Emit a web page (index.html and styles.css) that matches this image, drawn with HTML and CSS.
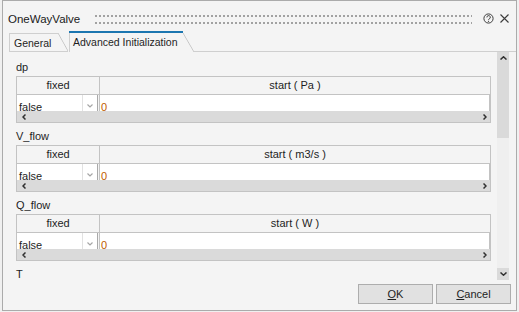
FILE: index.html
```html
<!DOCTYPE html>
<html lang="en">
<head>
  <meta charset="UTF-8">
  <title>OneWayValve</title>
  <link rel="stylesheet" href="styles.css">
</head>
<body>

  <div class="window">

    <!-- Title bar -->
    <div class="titlebar">
      <span class="title">OneWayValve</span>
      <div class="grip"></div>
      <svg class="help-icon" width="11" height="11" viewBox="0 0 11 11">
        <circle cx="5.5" cy="5.5" r="4.6" fill="none" stroke="#3c3c3c" stroke-width="1"/>
        <path d="M3.9 4.4 A1.7 1.7 0 1 1 6.4 5.8 C5.8 6.2 5.5 6.5 5.5 7.1" fill="none" stroke="#3c3c3c" stroke-width="1"/>
        <circle cx="5.5" cy="8.3" r="0.6" fill="#3c3c3c"/>
      </svg>
      <svg class="close-icon" width="9" height="9" viewBox="0 0 9 9">
        <path d="M0.5 0.5 L8.5 8.5 M8.5 0.5 L0.5 8.5" stroke="#3c3c3c" stroke-width="1.1"/>
      </svg>
    </div>

    <!-- Tabs -->
    <div class="tabs">
      <div class="tab tab-general">General</div>
      <div class="tab tab-active">Advanced Initialization</div>
      <div class="tab-fill"></div>
    </div>

    <!-- Parameters -->
    <div class="content">
      <div class="params">

        <div class="param-name">dp</div>
        <div class="grid">
          <div class="grid-head">
            <div class="head-fixed">fixed</div>
            <div class="head-start">start ( Pa )</div>
          </div>
          <div class="grid-row">
            <div class="combo">
              <span class="combo-text">false</span>
              <span class="combo-btn"><svg width="6" height="4" viewBox="0 0 6 4"><path d="M0.5 0.5 L3 3 L5.5 0.5" fill="none" stroke="#a6a6a6" stroke-width="1.2"/></svg></span>
            </div>
            <div class="start-cell">0</div>
          </div>
          <div class="hscroll">
            <svg width="4" height="6" viewBox="0 0 4 6"><path d="M3.5 0.5 L1 3 L3.5 5.5" fill="none" stroke="#303030" stroke-width="1.5"/></svg>
            <svg width="4" height="6" viewBox="0 0 4 6"><path d="M0.5 0.5 L3 3 L0.5 5.5" fill="none" stroke="#303030" stroke-width="1.5"/></svg>
          </div>
        </div>

        <div class="param-name">V_flow</div>
        <div class="grid">
          <div class="grid-head">
            <div class="head-fixed">fixed</div>
            <div class="head-start">start ( m3/s )</div>
          </div>
          <div class="grid-row">
            <div class="combo">
              <span class="combo-text">false</span>
              <span class="combo-btn"><svg width="6" height="4" viewBox="0 0 6 4"><path d="M0.5 0.5 L3 3 L5.5 0.5" fill="none" stroke="#a6a6a6" stroke-width="1.2"/></svg></span>
            </div>
            <div class="start-cell">0</div>
          </div>
          <div class="hscroll">
            <svg width="4" height="6" viewBox="0 0 4 6"><path d="M3.5 0.5 L1 3 L3.5 5.5" fill="none" stroke="#303030" stroke-width="1.5"/></svg>
            <svg width="4" height="6" viewBox="0 0 4 6"><path d="M0.5 0.5 L3 3 L0.5 5.5" fill="none" stroke="#303030" stroke-width="1.5"/></svg>
          </div>
        </div>

        <div class="param-name">Q_flow</div>
        <div class="grid">
          <div class="grid-head">
            <div class="head-fixed">fixed</div>
            <div class="head-start">start ( W )</div>
          </div>
          <div class="grid-row">
            <div class="combo">
              <span class="combo-text">false</span>
              <span class="combo-btn"><svg width="6" height="4" viewBox="0 0 6 4"><path d="M0.5 0.5 L3 3 L5.5 0.5" fill="none" stroke="#a6a6a6" stroke-width="1.2"/></svg></span>
            </div>
            <div class="start-cell">0</div>
          </div>
          <div class="hscroll">
            <svg width="4" height="6" viewBox="0 0 4 6"><path d="M3.5 0.5 L1 3 L3.5 5.5" fill="none" stroke="#303030" stroke-width="1.5"/></svg>
            <svg width="4" height="6" viewBox="0 0 4 6"><path d="M0.5 0.5 L3 3 L0.5 5.5" fill="none" stroke="#303030" stroke-width="1.5"/></svg>
          </div>
        </div>

        <div class="param-name">T</div>
      </div>

      <!-- Vertical scrollbar -->
      <div class="vscroll">
        <div class="vs-thumb">
          <svg width="7" height="4" viewBox="0 0 7 4"><path d="M0.5 3.5 L3.5 0.8 L6.5 3.5" fill="none" stroke="#303030" stroke-width="1.5"/></svg>
        </div>
        <div class="vs-track"></div>
        <div class="vs-down">
          <svg width="7" height="4" viewBox="0 0 7 4"><path d="M0.5 0.5 L3.5 3.2 L6.5 0.5" fill="none" stroke="#303030" stroke-width="1.5"/></svg>
        </div>
      </div>
    </div>

    <!-- Dialog buttons -->
    <div class="buttons">
      <button class="btn"><u>O</u>K</button>
      <button class="btn"><u>C</u>ancel</button>
    </div>

  </div>

</body>
</html>
```

FILE: styles.css
```css
body {
  margin: 0;
  background-color: #f0f0f0;
  font-family: "Liberation Sans", Arial, sans-serif;
  font-size: 11px;
  color: #1e1e1e;
}

.window {
  box-sizing: border-box;
  width: 515px;
  height: 311px;
  margin-left: 2px;
  border: 1px solid #ababab;
  background-color: #f4f4f4;
  display: flex;
  flex-direction: column;
}

/* Title bar */
.titlebar {
  box-sizing: border-box;
  height: 30px;
  display: flex;
  align-items: flex-start;
  padding: 10px 0 0 5px;
}

.title {
  font-size: 11.5px;
  line-height: 16px;
  color: #1a1a1a;
}

.grip {
  flex: 1;
  height: 9px;
  margin: 4px 11px 0 15px;
  background-image: conic-gradient(from 270deg at 2px 2px, #a2a2a2 25%, transparent 0);
  background-size: 4px 7px;
}

.help-icon {
  margin-top: 2px;
}

.close-icon {
  margin: 3px 7px 0 6px;
}

/* Tabs */
.tabs {
  height: 21px;
  display: flex;
  align-items: flex-end;
  padding-left: 6px;
}

.tab {
  position: relative;
  box-sizing: border-box;
  font-size: 10.5px;
  line-height: 14px;
  border-left: 1px solid #cfcfcf;
  white-space: nowrap;
}

.tab::before {
  content: "";
  position: absolute;
  top: 0;
  left: -1px;
  height: 1px;
  background-color: #cfcfcf;
}

.tab::after {
  content: "";
  position: absolute;
  right: 0;
  bottom: 0;
  background-image: linear-gradient(to top right, transparent calc(50% - 0.8px), #c6c6c6 50%, transparent calc(50% + 0.8px));
}

.tab-general {
  width: 59px;
  height: 19px;
  padding: 3px 0 0 4px;
  border-bottom: 1px solid #cfcfcf;
}

.tab-general::before {
  right: 10px;
}

.tab-general::after {
  top: 0;
  width: 10px;
}

.tab-active {
  width: 125px;
  height: 21px;
  margin-left: 1px;
  padding: 4px 0 0 3px;
}

.tab-active::before {
  right: 11px;
  height: 2px;
  background-color: #1c76b0;
}

.tab-active::after {
  top: 2px;
  width: 11px;
}

.tab-fill {
  flex: 1;
  border-bottom: 1px solid #cfcfcf;
}

/* Parameter list */
.content {
  height: 229px;
  display: flex;
}

.params {
  flex: 1;
  overflow: hidden;
  padding: 2px 6px 0 13px;
}

.param-name {
  box-sizing: border-box;
  height: 22px;
  padding-top: 4px;
  line-height: 18px;
}

.grid {
  border: 1px solid #c3c3c3;
}

.grid-head {
  height: 17px;
  display: flex;
  border-bottom: 1px solid #c3c3c3;
  line-height: 17px;
  text-align: center;
}

.head-fixed {
  width: 82px;
  border-right: 1px solid #c3c3c3;
}

.head-start {
  flex: 1;
}

.grid-row {
  height: 16px;
  display: flex;
  overflow: hidden;
  line-height: 16px;
}

.combo {
  box-sizing: border-box;
  width: 81px;
  display: flex;
  background-color: white;
  border-right: 1px solid #a9a9a9;
}

.combo-text {
  flex: 1;
  padding: 4px 0 0 2px;
  border-right: 1px solid #e2e2e2;
}

.combo-btn {
  width: 14px;
  display: flex;
  justify-content: center;
  align-items: flex-start;
  padding-top: 9px;
}

.start-cell {
  flex: 1;
  margin-left: 1px;
  padding: 4px 0 0 1px;
  background-color: white;
  border-left: 1px solid #c3c3c3;
  border-right: 1px solid #c3c3c3;
  color: #c05a00;
}

.hscroll {
  height: 11px;
  display: flex;
  justify-content: space-between;
  align-items: center;
  padding: 0 3px 0 5px;
  background-color: #dadada;
}

/* Vertical scrollbar */
.vscroll {
  width: 12px;
  margin: 0 7px 1px 0;
  display: flex;
  flex-direction: column;
  background-color: #efefef;
}

.vs-thumb {
  height: 86px;
  display: flex;
  justify-content: center;
  padding-top: 4px;
  box-sizing: border-box;
  background-color: #dadada;
}

.vs-track {
  flex: 1;
}

.vs-down {
  height: 12px;
  display: flex;
  justify-content: center;
  align-items: center;
  background-color: #dadada;
}

/* Buttons */
.buttons {
  display: flex;
  justify-content: flex-end;
  gap: 3px;
  padding: 3px 5px 0 0;
}

.btn {
  box-sizing: border-box;
  width: 75px;
  height: 20px;
  padding: 0;
  border: 1px solid #adadad;
  background-color: #e1e1e1;
  font-family: inherit;
  font-size: 11px;
  line-height: 18px;
  color: #1e1e1e;
}
```
